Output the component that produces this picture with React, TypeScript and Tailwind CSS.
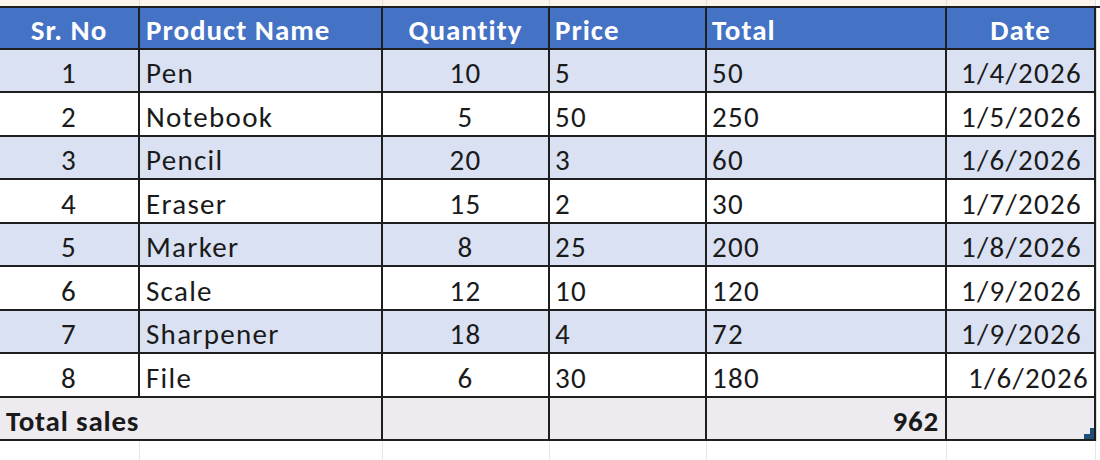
import React from "react";

const rows = [
  ["1", "Pen", "10", "5", "50", "1/4/2026"],
  ["2", "Notebook", "5", "50", "250", "1/5/2026"],
  ["3", "Pencil", "20", "3", "60", "1/6/2026"],
  ["4", "Eraser", "15", "2", "30", "1/7/2026"],
  ["5", "Marker", "8", "25", "200", "1/8/2026"],
  ["6", "Scale", "12", "10", "120", "1/9/2026"],
  ["7", "Sharpener", "18", "4", "72", "1/9/2026"],
  ["8", "File", "6", "30", "180", "1/6/2026"],
];

const heights = ["h-[43px]", "h-[44px]", "h-[43px]", "h-[44px]", "h-[43px]", "h-[44px]", "h-[43px]", "h-[44px]"];

const cell = "border-r-2 border-b-2 border-[#1e1e1e] flex items-end pb-[3px] overflow-hidden whitespace-nowrap";

export default function App() {
  return (
    <div
      className="w-[1100px] h-[460px] bg-white overflow-hidden text-[#1a1a1a] text-[29px] tracking-[1.3px] leading-none"
      style={{ fontFamily: "Carlito, Lato, 'Liberation Sans', sans-serif" }}
    >
      {/* top strip */}
      <div className="flex h-[6px] bg-[#fbf4ec]">
        <div className="w-[140px] border-r border-[#e4ded8]" />
        <div className="w-[243px] border-r border-[#e4ded8]" />
        <div className="w-[167px] border-r border-[#e4ded8]" />
        <div className="w-[157px] border-r border-[#e4ded8]" />
        <div className="w-[240px] border-r border-[#e4ded8]" />
        <div className="w-[149px] border-r border-[#e4ded8]" />
        <div className="flex-1 bg-white" />
      </div>

      {/* header */}
      <div className="flex h-[44px] border-t-2 border-[#1e1e1e]">
        <div className="flex w-[1096px] bg-[#4472c4] text-white font-bold tracking-[1px]">
          <div className={`${cell} w-[140px] justify-center`}>Sr. No</div>
          <div className={`${cell} w-[243px] pl-[6px]`}>Product Name</div>
          <div className={`${cell} w-[167px] justify-center`}>Quantity</div>
          <div className={`${cell} w-[157px] pl-[5px]`}>Price</div>
          <div className={`${cell} w-[240px] pl-[5px]`}>Total</div>
          <div className={`${cell} w-[149px] justify-center`}>Date</div>
        </div>
        <div className="flex-1 bg-white border-l border-[#e0e0e0]" />
      </div>

      {rows.map((r, i) => (
        <div key={i} className={`flex ${heights[i]}`}>
          <div className={`flex w-[1096px] ${i % 2 === 0 ? "bg-[#d9e1f2]" : "bg-white"}`}>
            <div className={`${cell} w-[140px] justify-center`}>{r[0]}</div>
            <div className={`${cell} w-[243px] pl-[6px]`}>{r[1]}</div>
            <div className={`${cell} w-[167px] justify-center`}>{r[2]}</div>
            <div className={`${cell} w-[157px] pl-[5px]`}>{r[3]}</div>
            <div className={`${cell} w-[240px] pl-[5px]`}>{r[4]}</div>
            <div className={`${cell} w-[149px] justify-end ${i === 7 ? "pr-[5px]" : "pr-[12px]"}`}>{r[5]}</div>
          </div>
          <div className="flex-1 bg-white border-l border-[#e0e0e0]" />
        </div>
      ))}

      {/* total row */}
      <div className="flex h-[43px]">
        <div className="flex w-[1096px] bg-[#edebf0] font-bold tracking-[0.8px]">
          <div className={`${cell} w-[383px] pl-[6px]`}>Total sales</div>
          <div className={`${cell} w-[167px]`} />
          <div className={`${cell} w-[157px]`} />
          <div className={`${cell} w-[240px] justify-end pr-[6px]`}>962</div>
          <div className={`${cell} w-[149px] relative`}>
            <svg className="absolute right-[-2px] bottom-[-2px]" width="12" height="13" viewBox="0 0 12 13">
              <polygon points="6,0 12,0 12,13 0,13 0,6 6,6" fill="#1f4e79" />
            </svg>
          </div>
        </div>
        <div className="flex-1 bg-white border-l border-[#e0e0e0]" />
      </div>

      {/* below */}
      <div className="flex h-[20px]">
        <div className="w-[140px] border-r border-[#e6e6e6]" />
        <div className="w-[243px] border-r border-[#e6e6e6]" />
        <div className="w-[167px] border-r border-[#e6e6e6]" />
        <div className="w-[157px] border-r border-[#e6e6e6]" />
        <div className="w-[240px] border-r border-[#e6e6e6]" />
        <div className="w-[149px] border-r border-[#e6e6e6]" />
        <div className="flex-1" />
      </div>
    </div>
  );
}
